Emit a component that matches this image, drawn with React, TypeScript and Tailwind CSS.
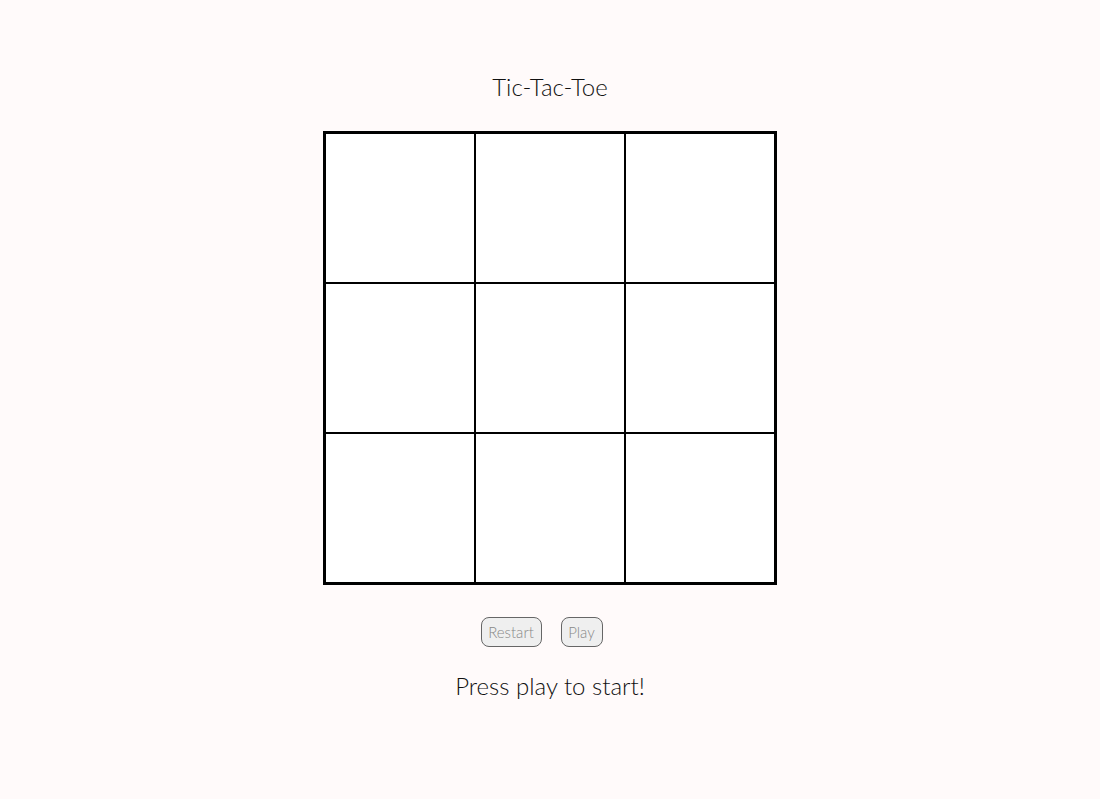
import { useState } from "react";

export default function App() {
  const [cells, setCells] = useState<string[]>(Array(9).fill(""));
  const [playing, setPlaying] = useState(false);

  return (
    <div
      className="min-h-screen bg-[#fffafa] flex flex-col items-center text-[#111]"
      style={{ fontFamily: "Lato, 'Noto Sans', sans-serif" }}
    >
      <h1 className="mt-[72px] text-[24px] leading-[30px] font-light">Tic-Tac-Toe</h1>

      <div className="mt-[29px] grid grid-cols-[repeat(3,150px)] border-2 border-black bg-white">
        {cells.map((c, i) => (
          <div
            key={i}
            onClick={() => {
              if (!playing || c) return;
              const next = [...cells];
              next[i] = "X";
              setCells(next);
            }}
            className="w-[150px] h-[150px] border border-black flex items-center justify-center text-6xl"
          >
            {c}
          </div>
        ))}
      </div>

      <div className="mt-[32px] flex">
        <button
          onClick={() => setCells(Array(9).fill(""))}
          className="h-[30px] w-[61px] mr-[19px] rounded-[8px] border border-[#666] bg-[#efefef] text-[15px] font-light text-[#888]"
        >
          Restart
        </button>
        <button
          onClick={() => setPlaying(true)}
          className="h-[30px] w-[42px] mr-[17px] rounded-[8px] border border-[#666] bg-[#efefef] text-[15px] font-light text-[#888]"
        >
          Play
        </button>
      </div>

      <p className="mt-[24px] text-[24px] leading-[30px] font-light">
        {playing ? "Player X's turn" : "Press play to start!"}
      </p>
    </div>
  );
}
